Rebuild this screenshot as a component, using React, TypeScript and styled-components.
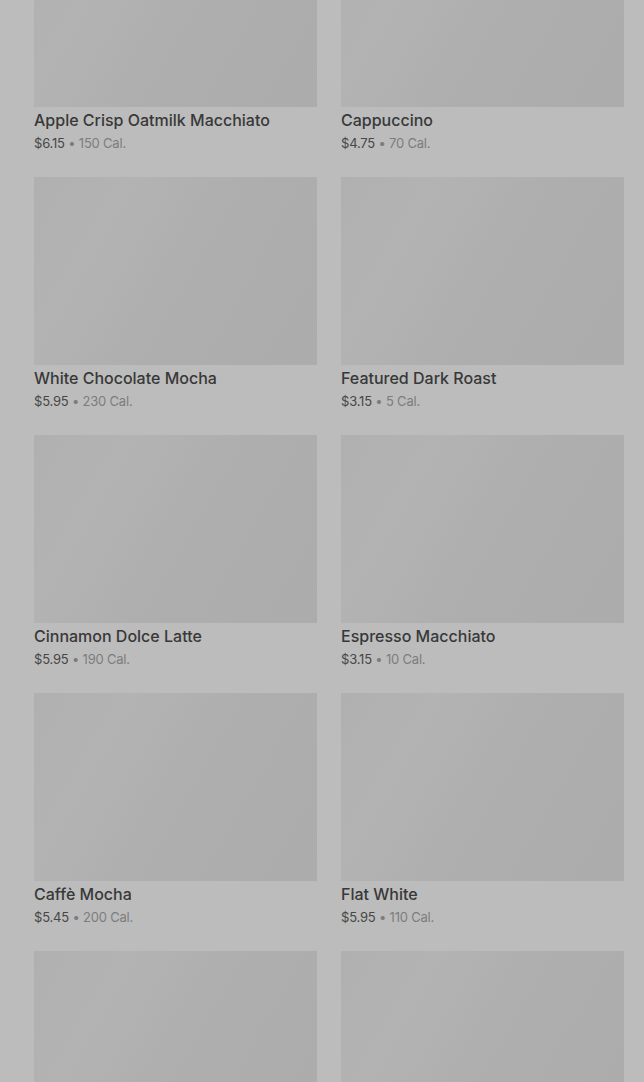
import React from 'react';
import styled, { createGlobalStyle } from 'styled-components';

interface TDrink {
  name: string;
  price: string;
  cal: number;
}

const drinks: TDrink[] = [
  { name: 'Apple Crisp Oatmilk Macchiato', price: '$6.15', cal: 150 },
  { name: 'Cappuccino', price: '$4.75', cal: 70 },
  { name: 'White Chocolate Mocha', price: '$5.95', cal: 230 },
  { name: 'Featured Dark Roast', price: '$3.15', cal: 5 },
  { name: 'Cinnamon Dolce Latte', price: '$5.95', cal: 190 },
  { name: 'Espresso Macchiato', price: '$3.15', cal: 10 },
  { name: 'Caffè Mocha', price: '$5.45', cal: 200 },
  { name: 'Flat White', price: '$5.95', cal: 110 },
  { name: '', price: '', cal: 0 },
  { name: '', price: '', cal: 0 },
];

const App: React.FC = () => {
  return (
    <>
      <GlobalStyle />
      <Page>
        <Grid>
          {drinks.map((d, i) => (
            <Card key={i}>
              <Thumb />
              {d.name && (
                <>
                  <Name>{d.name}</Name>
                  <Meta>
                    {d.price}
                    <Cal> • {d.cal} Cal.</Cal>
                  </Meta>
                </>
              )}
            </Card>
          ))}
        </Grid>
      </Page>
    </>
  );
};

export default App;

const GlobalStyle = createGlobalStyle`
  html, body {
    margin: 0;
    padding: 0;
    background: #bcbcbc;
  }
  body {
    font-family: Inter, "Liberation Sans", sans-serif;
    overflow: hidden;
  }
`;

const Page = styled.div`
  height: 1082px;
  overflow: hidden;
  background: #bcbcbc;
  padding: 0 20px 0 34px;
`;

const Grid = styled.div`
  display: grid;
  grid-template-columns: 283px 283px;
  column-gap: 24px;
  row-gap: 25px;
  margin-top: -81px;
`;

const Card = styled.div`
  display: flex;
  flex-direction: column;
`;

const Thumb = styled.div`
  height: 188px;
  background: linear-gradient(
    120deg,
    #b0b0b0 0%,
    #b3b3b3 25%,
    #aeaeae 55%,
    #acacac 100%
  );
`;

const Name = styled.div`
  margin-top: 2px;
  font-size: 16px;
  line-height: 22px;
  font-weight: 500;
  color: #383838;
  letter-spacing: 0;
`;

const Meta = styled.div`
  margin-top: 3px;
  font-size: 13px;
  line-height: 18px;
  color: #474747;
  letter-spacing: -0.2px;
`;

const Cal = styled.span`
  color: #7c7c7c;
`;
